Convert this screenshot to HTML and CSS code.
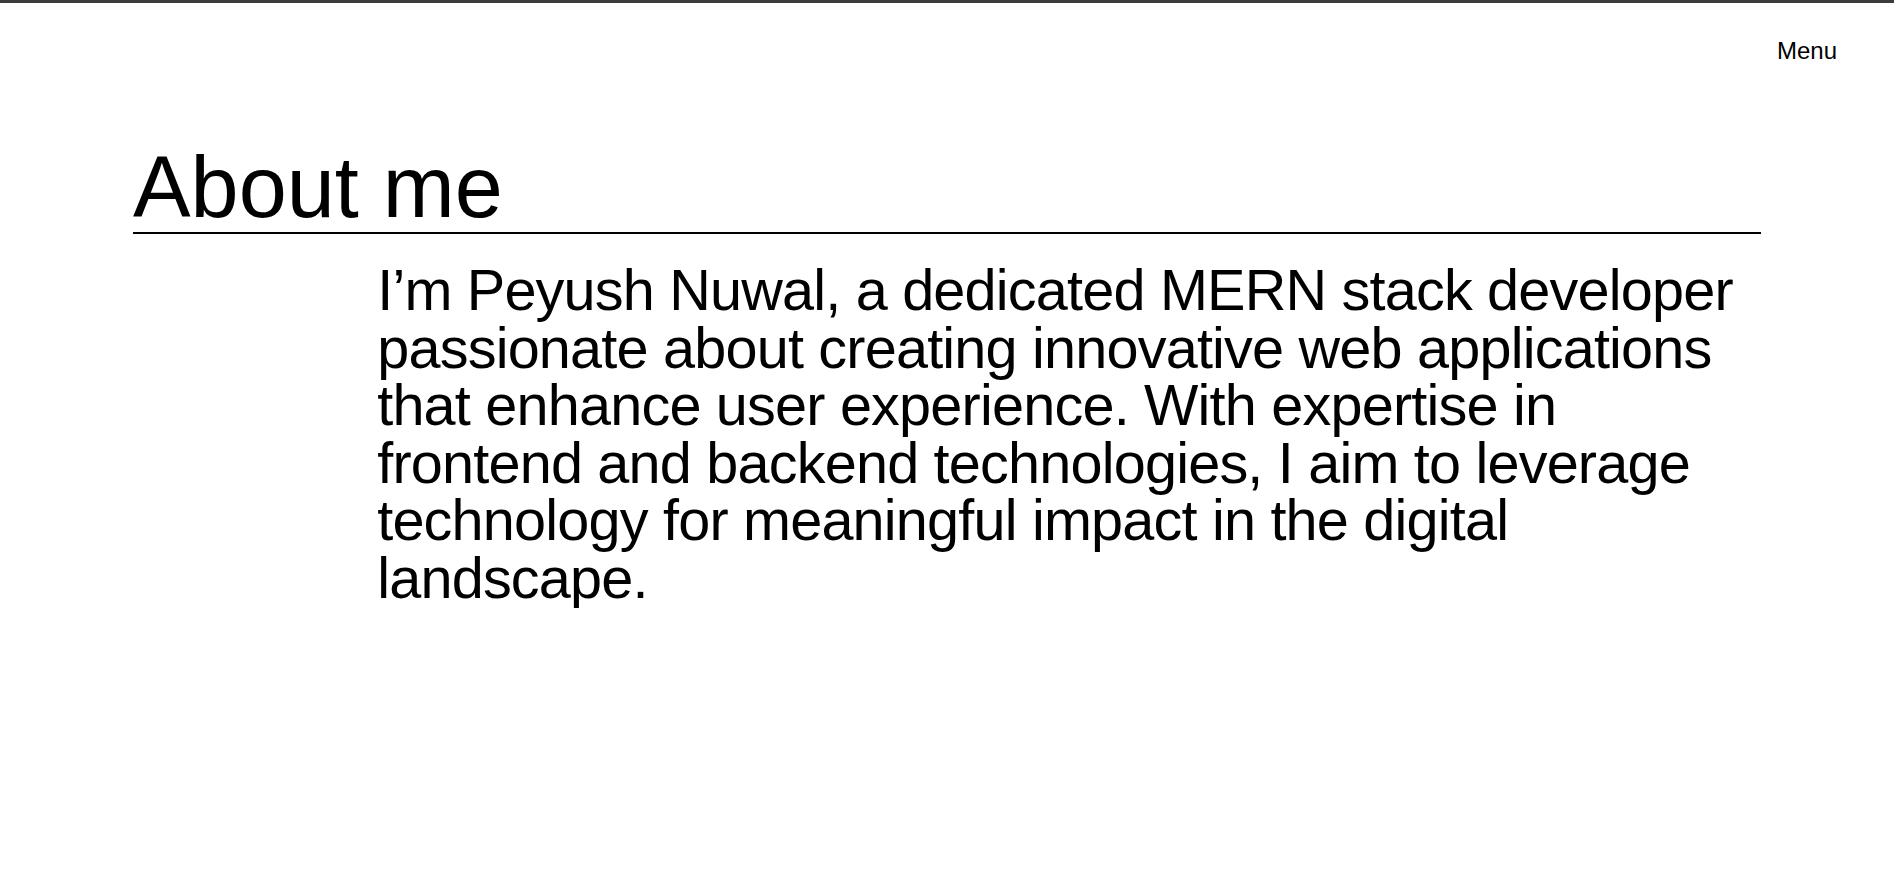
FILE: index.html
```html
<!DOCTYPE html>
<html lang="en">
<head>
<meta charset="utf-8">
<title>About me</title>
<link rel="stylesheet" href="styles.css">
</head>
<body>
<div class="topbar"></div>
<header class="header">
  <a class="menu" href="#">Menu</a>
</header>
<main class="about">
  <h1 class="about-title">About me</h1>
  <p class="about-text">I’m Peyush Nuwal, a dedicated MERN stack developer passionate about creating innovative web applications that enhance user experience. With expertise in frontend and backend technologies, I aim to leverage technology for meaningful impact in the digital landscape.</p>
</main>
</body>
</html>
```

FILE: styles.css
```css
html, body {
  margin: 0;
  padding: 0;
  background: #ffffff;
  color: #000000;
  font-family: "Liberation Sans", Arial, Helvetica, sans-serif;
}

.topbar {
  height: 3px;
  background: #3b3b3b;
}

.header {
  display: flex;
  justify-content: flex-end;
  height: 61px;
  box-sizing: border-box;
  padding: 34px 57px 0 0;
}

.menu {
  font-size: 24px;
  line-height: normal;
  color: #000000;
  text-decoration: none;
}

.about {
  padding: 0 133px;
}

.about-title {
  margin: 81px 0 0 0;
  padding-bottom: 3px;
  font-size: 86.4px;
  font-weight: 400;
  line-height: 84px;
  border-bottom: 2px solid #000000;
}

.about-text {
  margin: 28px 0 0 15%;
  font-size: 57.6px;
  line-height: 57.6px;
  letter-spacing: -0.8px;
}
```
